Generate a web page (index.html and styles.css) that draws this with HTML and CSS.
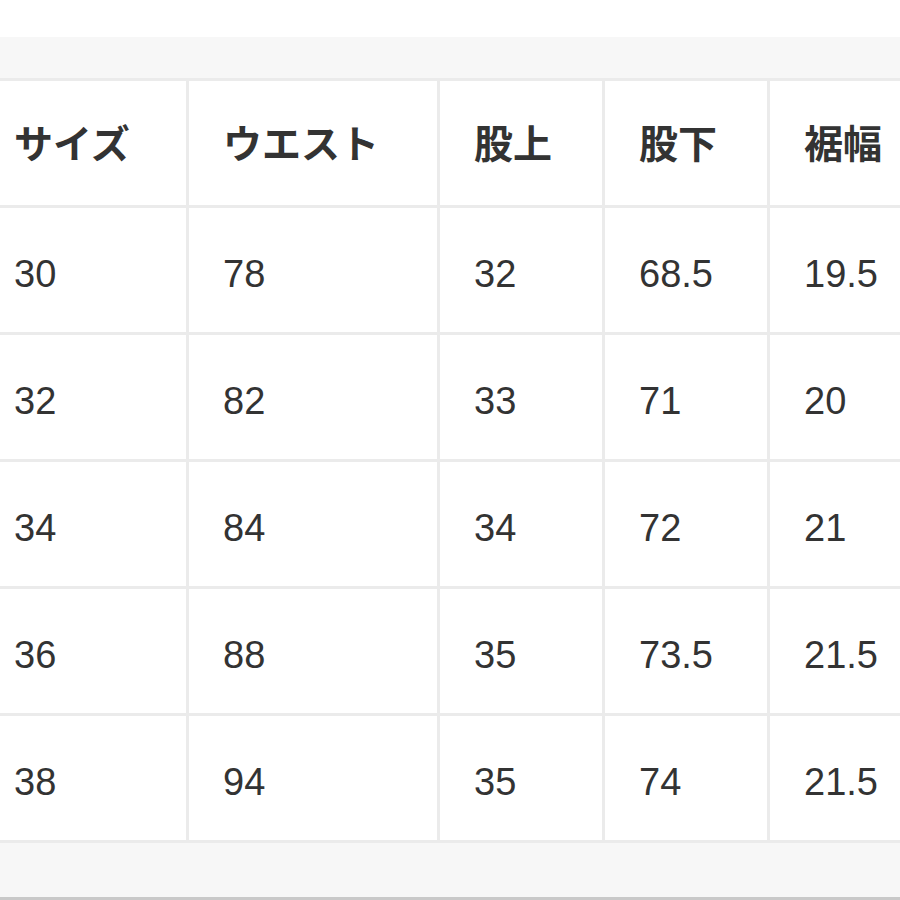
FILE: index.html
```html
<!DOCTYPE html>
<html lang="ja">
<head>
<meta charset="utf-8">
<link rel="stylesheet" href="styles.css">
</head>
<body>
<div class="top"></div>
<div class="panel">
  <div class="grid">
    <div class="cell head">サイズ</div>
    <div class="cell head">ウエスト</div>
    <div class="cell head">股上</div>
    <div class="cell head">股下</div>
    <div class="cell head">裾幅</div>

    <div class="cell">30</div><div class="cell">78</div><div class="cell">32</div><div class="cell">68.5</div><div class="cell">19.5</div>
    <div class="cell">32</div><div class="cell">82</div><div class="cell">33</div><div class="cell">71</div><div class="cell">20</div>
    <div class="cell">34</div><div class="cell">84</div><div class="cell">34</div><div class="cell">72</div><div class="cell">21</div>
    <div class="cell">36</div><div class="cell">88</div><div class="cell">35</div><div class="cell">73.5</div><div class="cell">21.5</div>
    <div class="cell">38</div><div class="cell">94</div><div class="cell">35</div><div class="cell">74</div><div class="cell">21.5</div>
  </div>
</div>
</body>
</html>
```
FILE: styles.css
```css
html, body {
  margin: 0;
  padding: 0;
  background: #ffffff;
  overflow: hidden;
}
body {
  width: 900px;
  height: 900px;
  font-family: "Liberation Sans", "Noto Sans CJK JP", sans-serif;
  color: #333333;
}
.top {
  height: 37px;
  background: #ffffff;
}
.panel {
  background: #f7f7f7;
  padding-top: 41px;
  height: 863px;
  box-sizing: border-box;
  border-bottom: 3px solid #c9c9c9;
  overflow: hidden;
}
.grid {
  margin-left: -20px;
  width: 960px;
  display: grid;
  grid-template-columns: 206px 248px 162px 162px 162px;
  grid-auto-rows: 124px;
  gap: 3px;
  background: #ebebeb;
  border-top: 3px solid #ebebeb;
  border-bottom: 3px solid #ebebeb;
}
.cell {
  background: #ffffff;
  display: flex;
  align-items: center;
  padding-left: 34px;
  padding-top: 8px;
  box-sizing: border-box;
  font-size: 38px;
  line-height: 1;
}
.head {
  font-family: "Noto Sans CJK JP", sans-serif;
  font-weight: 700;
  font-size: 39px;
  padding-top: 0;
  padding-bottom: 4px;
}
```
